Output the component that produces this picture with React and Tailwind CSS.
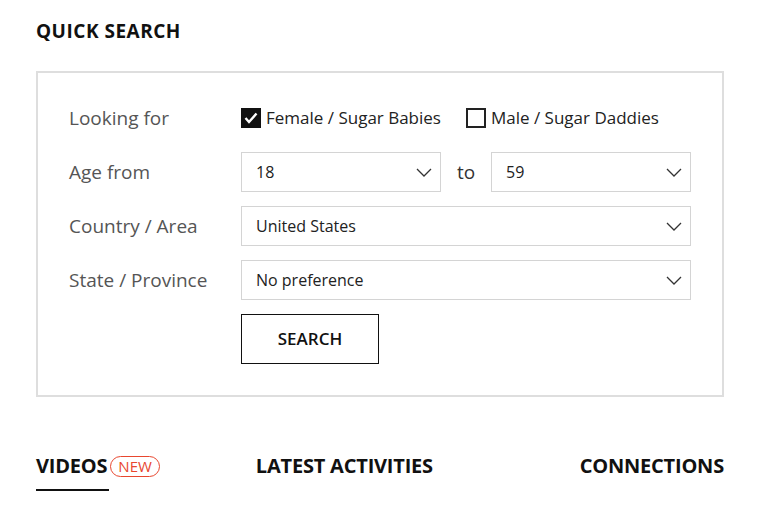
import React from 'react';

const font = { fontFamily: '"Open Sans", Lato, sans-serif' };

const Chevron = () => (
  <svg width="16" height="9" viewBox="0 0 16 9" fill="none" className="shrink-0">
    <path d="M1 1l7 7 7-7" stroke="#333" strokeWidth="1.3" />
  </svg>
);

const Select = ({ value, className = '' }) => (
  <div className={`flex items-center justify-between h-10 border border-[#d4d4d4] pl-[14px] pr-[8px] text-[16px] text-[#222] ${className}`}>
    <span>{value}</span>
    <Chevron />
  </div>
);

const Check = ({ checked, label }) => (
  <label className="flex items-center gap-[5px] text-[17px] text-[#222]">
    <span className={`w-5 h-5 flex items-center justify-center border-2 ${checked ? 'bg-[#111] border-[#111]' : 'border-[#222] bg-white'}`}>
      {checked && (
        <svg width="14" height="12" viewBox="0 0 14 12" fill="none">
          <path d="M1.5 6l3.5 4L12.5 1.5" stroke="white" strokeWidth="2.4" />
        </svg>
      )}
    </span>
    {label}
  </label>
);

const Row = ({ label, children }) => (
  <div className="flex items-center min-h-10">
    <div className="w-[172px] shrink-0 text-[19px] text-[#555]">{label}</div>
    {children}
  </div>
);

export default function App() {
  return (
    <div className="w-[768px] h-[518px] bg-white pl-[36px] pr-[44px] pt-[20px] overflow-hidden" style={font}>
      <h2 className="text-[19px] font-bold text-[#111] leading-[22px] tracking-[0.5px]">QUICK SEARCH</h2>
      <div className="mt-[29px] h-[326px] border-2 border-[#dedede] pl-[31px] pt-[25px] flex flex-col gap-[14px]">
        <Row label="Looking for">
          <div className="flex items-center gap-[25px]">
            <Check checked label="Female / Sugar Babies" />
            <Check label="Male / Sugar Daddies" />
          </div>
        </Row>
        <Row label="Age from">
          <div className="flex items-center">
            <Select value="18" className="w-[200px]" />
            <span className="w-[50px] text-center text-[19px] text-[#333]">to</span>
            <Select value="59" className="w-[200px]" />
          </div>
        </Row>
        <Row label="Country / Area">
          <Select value="United States" className="w-[450px]" />
        </Row>
        <Row label="State / Province">
          <Select value="No preference" className="w-[450px]" />
        </Row>
        <div className="pl-[172px]">
          <button className="w-[138px] h-[50px] border border-[#111] text-[17px] font-semibold text-[#111]">SEARCH</button>
        </div>
      </div>
      <div className="mt-[56px] flex items-start text-[20px] font-bold text-[#111] tracking-[-0.2px]">
        <div className="flex flex-col">
          <div className="flex items-center gap-[3px] leading-[26px]">
            <span>VIDEOS</span>
            <span className="px-[7px] h-[21px] flex items-center rounded-full border border-[#e8472f] text-[#e8472f] text-[15px] font-normal tracking-normal">NEW</span>
          </div>
          <div className="mt-[10px] w-[73px] h-[2px] bg-[#111]" />
        </div>
        <div className="ml-[96px] leading-[26px]">LATEST ACTIVITIES</div>
        <div className="ml-auto leading-[26px]">CONNECTIONS</div>
      </div>
    </div>
  );
}
